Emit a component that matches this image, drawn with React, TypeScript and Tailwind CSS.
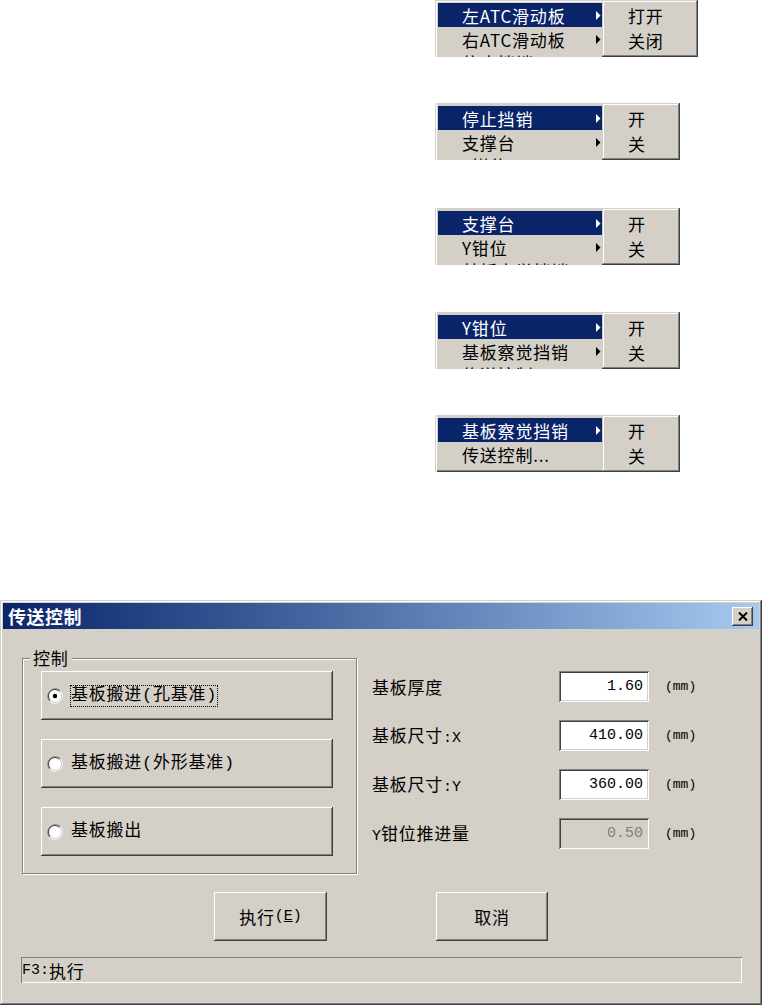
import React from "react";

const CJK = "font-['Noto_Sans_CJK_SC',sans-serif]";
const MONO = "font-['Liberation_Mono','Noto_Sans_CJK_SC',monospace]";

const windowBorder =
  "shadow-[inset_-1px_-1px_#404040,inset_1px_1px_#d4d0c8,inset_-2px_-2px_#808080,inset_2px_2px_#ffffff]";
const raised =
  "shadow-[inset_-1px_-1px_#404040,inset_1px_1px_#ffffff,inset_-2px_-2px_#808080,inset_2px_2px_#d4d0c8]";
const sunken =
  "shadow-[inset_1px_1px_#808080,inset_-1px_-1px_#ffffff,inset_2px_2px_#404040,inset_-2px_-2px_#d4d0c8]";

const ITEMS = ["左ATC滑动板", "右ATC滑动板", "停止挡销", "支撑台", "Y钳位", "基板察觉挡销", "传送控制..."];

function Arrow({ white }: { white: boolean }) {
  return (
    <svg width="5" height="9" viewBox="0 0 5 9" className="mr-[1px] shrink-0 self-center">
      <polygon points="0,0 4.5,4.5 0,9" fill={white ? "#ffffff" : "#000000"} />
    </svg>
  );
}

function MenuSnippet({
  start,
  sub,
  subWidth,
  first,
  last,
}: {
  start: number;
  sub: [string, string];
  subWidth: string;
  first?: boolean;
  last?: boolean;
}) {
  const rows = ITEMS.slice(start, start + 3);
  const mainShadow = first
    ? "shadow-[inset_1px_1px_#d4d0c8,inset_2px_2px_#ffffff]"
    : last
    ? "shadow-[inset_1px_0_#d4d0c8,inset_2px_0_#ffffff,inset_0_-1px_#404040,inset_0_-2px_#808080]"
    : "shadow-[inset_1px_0_#d4d0c8,inset_2px_0_#ffffff]";
  return (
    <div className="flex h-[57px]">
      <div className={`w-[167px] h-[57px] overflow-hidden bg-[#d4d0c8] flex flex-col pl-[3px] pt-[3px] ${mainShadow}`}>
        {rows.map((t, i) => (
          <div
            key={t}
            className={`h-[24px] shrink-0 flex pl-[24px] ${i === 2 ? "items-start pt-[3px]" : "items-center"} ${
              i === 0 ? "bg-[#0a246a] text-white" : "text-black"
            }`}
          >
            <span className="flex-1 text-[17px] leading-none tracking-[0.8px] whitespace-nowrap">{t}</span>
            {t !== "传送控制..." && <Arrow white={i === 0} />}
          </div>
        ))}
      </div>
      <div className={`${subWidth} h-[57px] bg-[#d4d0c8] flex flex-col pt-[3px] ${windowBorder}`}>
        {sub.map((s) => (
          <div
            key={s}
            className="h-[25px] shrink-0 flex items-center pl-[26px] text-[17px] leading-none tracking-[0.8px] text-black"
          >
            {s}
          </div>
        ))}
      </div>
    </div>
  );
}

function Radio({ checked }: { checked?: boolean }) {
  return (
    <svg width="16" height="16" viewBox="0 0 16 16" className="shrink-0">
      <circle cx="8" cy="8" r="6.5" fill="#ffffff" />
      <path d="M2.7 13.3 A7.5 7.5 0 0 1 13.3 2.7" stroke="#808080" fill="none" strokeWidth="1" />
      <path d="M13.3 2.7 A7.5 7.5 0 0 1 2.7 13.3" stroke="#ffffff" fill="none" strokeWidth="1" />
      <path d="M3.4 12.6 A6.5 6.5 0 0 1 12.6 3.4" stroke="#404040" fill="none" strokeWidth="1" />
      <path d="M12.6 3.4 A6.5 6.5 0 0 1 3.4 12.6" stroke="#d4d0c8" fill="none" strokeWidth="1" />
      {checked && <circle cx="8" cy="8" r="2.2" fill="#000000" />}
    </svg>
  );
}

function OptionButton({ label, checked, focus }: { label: string; checked?: boolean; focus?: boolean }) {
  return (
    <div className={`w-[292px] h-[49px] shrink-0 bg-[#d4d0c8] flex items-center pl-[6px] ${raised}`}>
      <Radio checked={checked} />
      <span
        className={`ml-[7px] ${MONO} text-[17px] leading-[20px] tracking-[0.75px] text-black whitespace-nowrap ${
          focus ? "border border-dotted border-black" : "border border-transparent"
        }`}
      >
        {label}
      </span>
    </div>
  );
}

function FieldRow({ label, value, disabled }: { label: React.ReactNode; value: string; disabled?: boolean }) {
  return (
    <div className="flex items-center h-[31px]">
      <div className="w-[187px] text-[17px] leading-none tracking-[0.75px] text-black whitespace-nowrap">{label}</div>
      <div
        className={`w-[90px] h-[31px] flex items-center justify-end pr-[6px] ${
          disabled ? "bg-[#d4d0c8] text-[#808080]" : "bg-white text-black"
        } ${sunken} ${MONO} text-[15px] leading-none`}
      >
        {value}
      </div>
      <div className={`ml-[16px] text-[13px] leading-none text-black ${MONO}`}>(mm)</div>
    </div>
  );
}

function PushButton({ children, width }: { children: React.ReactNode; width: string }) {
  return (
    <div className={`${width} h-[49px] bg-[#d4d0c8] flex items-center justify-center text-black ${raised}`}>
      {children}
    </div>
  );
}

export default function App() {
  return (
    <div className={`w-[762px] h-[1005px] bg-white overflow-hidden ${CJK}`}>
      <div className="flex flex-col pl-[435px]">
        <MenuSnippet start={0} sub={["打开", "关闭"]} subWidth="w-[96px]" first />
        <div className="mt-[46px]">
          <MenuSnippet start={2} sub={["开", "关"]} subWidth="w-[78px]" />
        </div>
        <div className="mt-[48px]">
          <MenuSnippet start={3} sub={["开", "关"]} subWidth="w-[78px]" />
        </div>
        <div className="mt-[47px]">
          <MenuSnippet start={4} sub={["开", "关"]} subWidth="w-[78px]" />
        </div>
        <div className="mt-[46px]">
          <MenuSnippet start={5} sub={["开", "关"]} subWidth="w-[78px]" last />
        </div>
      </div>

      <div className={`mt-[128px] w-[762px] h-[405px] bg-[#d4d0c8] p-[3px] flex flex-col ${windowBorder}`}>
        <div className="h-[26px] shrink-0 bg-linear-to-r from-[#0a246a] to-[#a6caf0] flex items-center pl-[5px] pr-[6px]">
          <span className="flex-1 text-white font-bold text-[18px] leading-none tracking-[0.5px]">传送控制</span>
          <div className={`w-[21px] h-[19px] bg-[#d4d0c8] flex items-center justify-center ${raised}`}>
            <svg width="10" height="9" viewBox="0 0 10 9">
              <path d="M1 0.5 L9 8.5 M9 0.5 L1 8.5" stroke="#000000" strokeWidth="2" />
            </svg>
          </div>
        </div>

        <div className="flex items-start mt-[29px] ml-[19px]">
          <div className="relative w-[335px] h-[216px] border border-[#808080] shadow-[1px_1px_0_#ffffff,inset_1px_1px_0_#ffffff] flex flex-col pl-[18px] pt-[12px] gap-[19px]">
            <span className="absolute left-[7px] -top-[11px] px-[3px] bg-[#d4d0c8] text-[17px] leading-[20px] tracking-[0.75px] text-black">
              控制
            </span>
            <OptionButton label="基板搬进(孔基准)" checked focus />
            <OptionButton label="基板搬进(外形基准)" />
            <OptionButton label="基板搬出" />
          </div>
          <div className="ml-[15px] pt-[13px] flex flex-col gap-[18px]">
            <FieldRow label="基板厚度" value="1.60" />
            <FieldRow
              label={
                <>
                  基板尺寸<span className={`${MONO} text-[15px] tracking-normal`}>:X</span>
                </>
              }
              value="410.00"
            />
            <FieldRow
              label={
                <>
                  基板尺寸<span className={`${MONO} text-[15px] tracking-normal`}>:Y</span>
                </>
              }
              value="360.00"
            />
            <FieldRow
              label={
                <>
                  <span className={`${MONO} text-[15px] tracking-normal`}>Y</span>钳位推进量
                </>
              }
              value="0.50"
              disabled
            />
          </div>
        </div>

        <div className="flex justify-center gap-[109px] mt-[18px]">
          <PushButton width="w-[113px]">
            <span className="text-[17px] leading-none tracking-[0.75px]">执行</span>
            <span className={`${MONO} text-[15px] leading-none`}>
              (<span className="underline">E</span>)
            </span>
          </PushButton>
          <PushButton width="w-[112px]">
            <span className="text-[17px] leading-none tracking-[0.75px]">取消</span>
          </PushButton>
        </div>

        <div className="mt-[16px] ml-[18px] mr-[17px] h-[26px] flex items-center pl-[1px] shadow-[inset_1px_1px_#808080,inset_-1px_-1px_#ffffff] text-black">
          <span className={`${MONO} text-[15px] leading-none`}>F3:</span>
          <span className="text-[17px] leading-none tracking-[0.75px]">执行</span>
        </div>
      </div>
    </div>
  );
}
